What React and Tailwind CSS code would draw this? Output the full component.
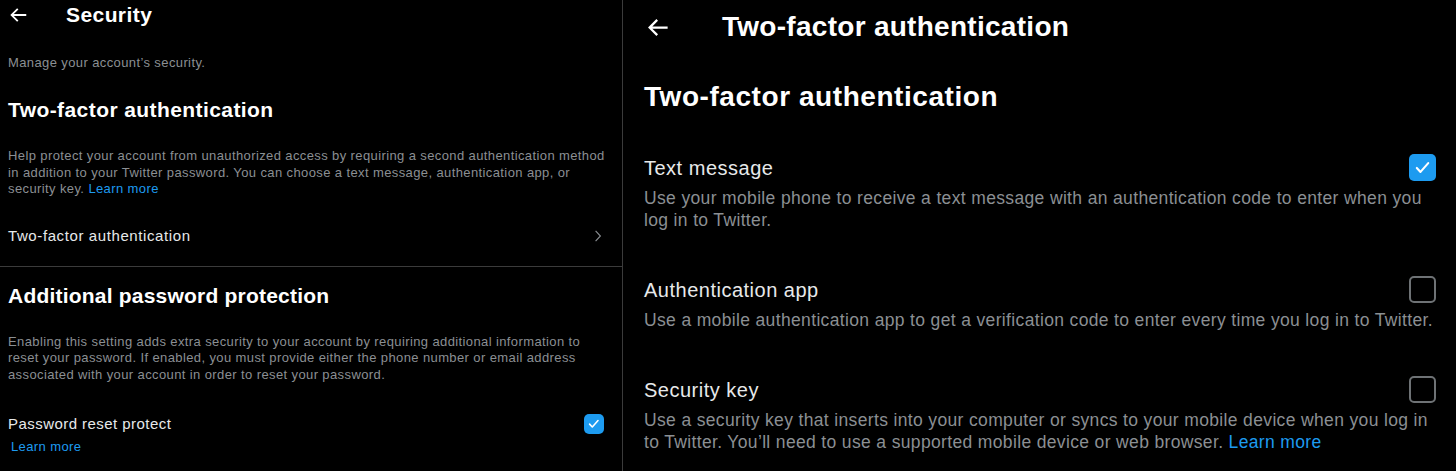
import React from "react";

const BackArrow = ({ className }) => (
  <svg viewBox="0 0 24 24" className={className} fill="currentColor">
    <path d="M7.414 13l5.043 5.04-1.414 1.42L3.586 12l7.457-7.46 1.414 1.42L7.414 11H21v2H7.414z" />
  </svg>
);

const Check = ({ className }) => (
  <svg viewBox="0 0 24 24" className={className} fill="none" stroke="currentColor" strokeWidth="2.4" strokeLinecap="round" strokeLinejoin="round">
    <path d="M5.5 12.5l4.2 4.5L18.5 7" />
  </svg>
);

const Checkbox = ({ checked, size }) =>
  checked ? (
    <div className={`${size} shrink-0 rounded-[5px] bg-[#1d9bf0] flex items-center justify-center text-white`}>
      <Check className="w-[78%] h-[78%]" />
    </div>
  ) : (
    <div className={`${size} shrink-0 rounded-[5px] border-2 border-[#6e7275]`} />
  );

const options = [
  {
    title: "Text message",
    checked: true,
    desc: "Use your mobile phone to receive a text message with an authentication code to enter when you log in to Twitter.",
  },
  {
    title: "Authentication app",
    checked: false,
    desc: "Use a mobile authentication app to get a verification code to enter every time you log in to Twitter.",
  },
  {
    title: "Security key",
    checked: false,
    desc: "Use a security key that inserts into your computer or syncs to your mobile device when you log in to Twitter. You’ll need to use a supported mobile device or web browser.",
    link: true,
  },
];

const App = () => {
  return (
    <div className="w-[1456px] h-[471px] bg-black flex overflow-hidden font-['Liberation_Sans',Arial,sans-serif] text-[#e7e9ea]">
      {/* Security panel */}
      <div className="w-[623px] shrink-0 border-r border-[#3b3b3b]">
        <div className="h-[30px] flex items-center">
          <BackArrow className="w-[22px] h-[22px] ml-[7px] text-white" />
          <h1 className="ml-[37px] text-[21px] font-bold leading-[24px] tracking-[0.02em] text-white">Security</h1>
        </div>
        <div className="px-[8px]">
          <p className="mt-[25px] text-[13px] leading-[16px] tracking-[0.03em] text-[#8b8f93]">Manage your account’s security.</p>
          <h2 className="mt-[27px] text-[21px] font-bold leading-[24px] tracking-[0.02em] text-white">Two-factor authentication</h2>
          <p className="mt-[26px] w-[602px] text-[13px] leading-[16.6px] tracking-[0.03em] text-[#8b8f93]">
            Help protect your account from unauthorized access by requiring a second authentication method in addition to your Twitter password. You can choose a text message, authentication app, or security key.{" "}
            <span className="text-[#1d9bf0]">Learn more</span>
          </p>
        </div>
        <div className="pl-[8px] pr-[20px] pt-[28px] pb-[20px] flex items-center justify-between border-b border-[#3b3b3b]">
          <span className="text-[15px] leading-[20px] tracking-[0.04em]">Two-factor authentication</span>
          <svg viewBox="0 0 10 16" className="w-[8px] h-[14px] text-[#8b8f93]" fill="none" stroke="currentColor" strokeWidth="1.4">
            <path d="M2 1.5l6 6.5-6 6.5" />
          </svg>
        </div>
        <div className="px-[8px]">
          <h2 className="mt-[17px] text-[21px] font-bold leading-[24px] tracking-[0.01em] text-white">Additional password protection</h2>
          <p className="mt-[26px] w-[592px] text-[13px] leading-[16.6px] tracking-[0.03em] text-[#8b8f93]">
            Enabling this setting adds extra security to your account by requiring additional information to reset your password. If enabled, you must provide either the phone number or email address associated with your account in order to reset your password.
          </p>
          <div className="mt-[30px] flex items-center justify-between pr-[10px]">
            <span className="text-[15px] leading-[20px] tracking-[0.03em]">Password reset protect</span>
            <Checkbox checked size="w-[20px] h-[20px]" />
          </div>
          <p className="mt-[5px] ml-[3px] text-[13px] leading-[16px] tracking-[0.03em] text-[#1d9bf0]">Learn more</p>
        </div>
      </div>

      {/* Two-factor panel */}
      <div className="flex-1 min-w-0">
        <div className="h-[54px] flex items-center">
          <BackArrow className="w-[27px] h-[27px] ml-[21px] text-white" />
          <h1 className="ml-[51px] text-[28px] font-bold leading-[32px] tracking-[0.01em] text-white">Two-factor authentication</h1>
        </div>
        <div className="pl-[21px] pr-[20px]">
          <h2 className="mt-[27px] text-[28px] font-bold leading-[32px] tracking-[0.02em] text-white">Two-factor authentication</h2>
          <div className="mt-[41px] flex flex-col gap-[45px]">
            {options.map((o) => (
              <div key={o.title}>
                <div className="flex items-center justify-between">
                  <span className="text-[20px] leading-[24px] tracking-[0.025em]">{o.title}</span>
                  <Checkbox checked={o.checked} size="w-[27px] h-[27px]" />
                </div>
                <p className="mt-[6px] text-[17.5px] leading-[22px] tracking-[0.02em] text-[#8b8f93]">
                  {o.desc}
                  {o.link && (
                    <>
                      {" "}
                      <span className="text-[#1d9bf0]">Learn more</span>
                    </>
                  )}
                </p>
              </div>
            ))}
          </div>
        </div>
      </div>
    </div>
  );
};

export default App;
